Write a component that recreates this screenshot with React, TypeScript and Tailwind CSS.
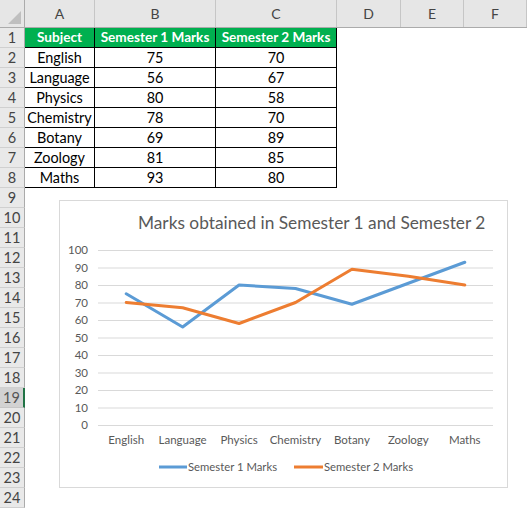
const cols = [
  { label: 'A', w: 'w-[70px]' },
  { label: 'B', w: 'w-[121px]' },
  { label: 'C', w: 'w-[121px]' },
  { label: 'D', w: 'w-[64px]' },
  { label: 'E', w: 'w-[63px]' },
  { label: 'F', w: 'w-[63px]' },
];

const data = [
  { subject: 'English', s1: 75, s2: 70 },
  { subject: 'Language', s1: 56, s2: 67 },
  { subject: 'Physics', s1: 80, s2: 58 },
  { subject: 'Chemistry', s1: 78, s2: 70 },
  { subject: 'Botany', s1: 69, s2: 89 },
  { subject: 'Zoology', s1: 81, s2: 85 },
  { subject: 'Maths', s1: 93, s2: 80 },
];

const rowNums = Array.from({ length: 24 }, (_, i) => i + 1);

// chart geometry (relative to chart box)
const gx0 = 38;
const gx1 = 433;
const y0 = 224;
const unit = 1.75;
const step = (gx1 - gx0) / data.length;
const cx = (i: number) => gx0 + step * i + step / 2;
const cy = (v: number) => y0 - v * unit;

function Chart() {
  const blue = data.map((d, i) => `${cx(i)},${cy(d.s1)}`).join(' ');
  const orange = data.map((d, i) => `${cx(i)},${cy(d.s2)}`).join(' ');
  return (
    <div className="absolute left-[59px] top-[200px] w-[449px] h-[288px] bg-white border border-[#D9D9D9]">
      <svg width="447" height="286" className="block" style={{ fontFamily: 'Lato, "Open Sans", sans-serif' }}>
        <text x="78" y="28" fontSize="17.3" fill="#595959">
          Marks obtained in Semester 1 and Semester 2
        </text>
        {Array.from({ length: 11 }, (_, i) => i * 10).map((v) => (
          <g key={v}>
            <line x1={gx0} x2={gx1} y1={cy(v) + 0.5} y2={cy(v) + 0.5} stroke="#D9D9D9" strokeWidth="1" />
            <text x="28" y={cy(v) + 4} fontSize="11.5" fill="#595959" textAnchor="end">
              {v}
            </text>
          </g>
        ))}
        {data.map((d, i) => (
          <text key={d.subject} x={cx(i)} y="243" fontSize="11.5" fill="#595959" textAnchor="middle">
            {d.subject}
          </text>
        ))}
        <polyline points={blue} fill="none" stroke="#5B9BD5" strokeWidth="3" strokeLinejoin="round" strokeLinecap="round" />
        <polyline points={orange} fill="none" stroke="#ED7D31" strokeWidth="3" strokeLinejoin="round" strokeLinecap="round" />
        <line x1="99" x2="127" y1="266" y2="266" stroke="#5B9BD5" strokeWidth="3" />
        <text x="128" y="270" fontSize="11.3" fill="#595959">Semester 1 Marks</text>
        <line x1="234" x2="263" y1="266" y2="266" stroke="#ED7D31" strokeWidth="3" />
        <text x="264" y="270" fontSize="11.3" fill="#595959">Semester 2 Marks</text>
      </svg>
    </div>
  );
}

export default function App() {
  return (
    <div
      className="relative w-[527px] h-[509px] overflow-hidden bg-white text-[#000]"
      style={{ fontFamily: 'Lato, "Open Sans", sans-serif' }}
    >
      {/* column headers */}
      <div className="flex h-[28px] bg-[#E6E6E6] border-b border-[#ABABAB]">
        <div className="relative w-[25px] shrink-0 border-r border-[#ABABAB]">
          <div className="absolute right-[3px] bottom-[3px] w-0 h-0 border-l-[13px] border-l-transparent border-b-[13px] border-b-[#BFBFBF]" />
        </div>
        {cols.map((c) => (
          <div
            key={c.label}
            className={`${c.w} shrink-0 flex items-center justify-center text-[14px] text-[#444] border-r border-[#C6C6C6]`}
          >
            {c.label}
          </div>
        ))}
      </div>

      {/* rows */}
      {rowNums.map((n) => {
        const hdr = n === 1;
        const d = n >= 2 && n <= 8 ? data[n - 2] : null;
        const inTable = hdr || d;
        const cell = hdr
          ? 'bg-[#00B050] text-white font-bold text-[13.6px]'
          : 'text-[14.4px] text-black';
        return (
          <div key={n} className="flex h-[20px]">
            <div
              className={`w-[25px] shrink-0 flex items-center justify-center text-[14.5px] border-b ${
                n === 19
                  ? 'bg-[#D2D2D2] text-[#555] border-r-2 border-r-[#217346] border-b-[#C6C6C6]'
                  : 'bg-[#E9E9E9] text-[#444] border-r border-r-[#ABABAB] border-b-[#D0D0D0]'
              }`}
            >
              {n}
            </div>
            {inTable ? (
              <>
                <div className={`w-[70px] shrink-0 flex items-center justify-center border-r border-b border-black whitespace-nowrap ${cell}`}>
                  {hdr ? 'Subject' : d!.subject}
                </div>
                <div className={`w-[121px] shrink-0 flex items-center justify-center border-r border-b border-black whitespace-nowrap ${cell}`}>
                  {hdr ? 'Semester 1 Marks' : d!.s1}
                </div>
                <div className={`w-[121px] shrink-0 flex items-center justify-center border-r border-b border-black whitespace-nowrap ${cell}`}>
                  {hdr ? 'Semester 2 Marks' : d!.s2}
                </div>
              </>
            ) : null}
          </div>
        );
      })}

      <Chart />
    </div>
  );
}
